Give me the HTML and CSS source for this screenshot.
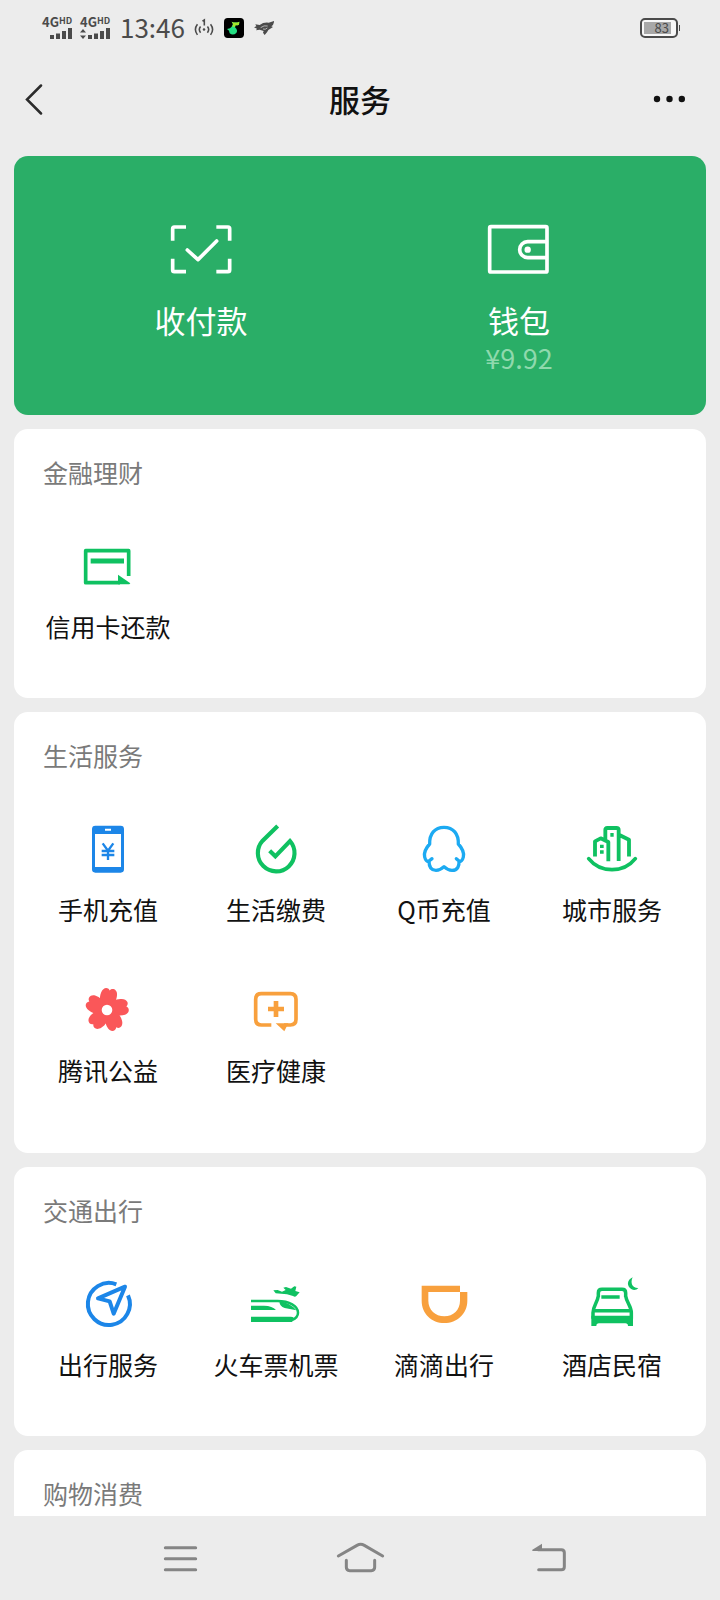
FILE: index.html
```html
<!DOCTYPE html>
<html lang="zh-CN">
<head>
<meta charset="utf-8">
<meta name="viewport" content="width=device-width, initial-scale=1">
<title>服务</title>
<link rel="stylesheet" href="styles.css">
</head>
<body>
<div class="app">
  <div class="status">
    <div class="signal">
      <span class="signal-name">4G<small>HD</small></span>
      <svg class="signal-bars" viewBox="0 0 32 11" aria-hidden="true"><path d="M10 11V7M16 11V5.500M22 11V3M28 11V0"/></svg>
    </div>
    <div class="signal">
      <span class="signal-name">4G<small>HD</small></span>
      <svg class="signal-bars" viewBox="0 0 32 11" aria-hidden="true"><path d="M10 11V7M16 11V5.500M22 11V3M28 11V0"/><path class="solid" d="M0 4.500 3 1 6 4.500ZM0 7.500 3 11 6 7.500Z"/></svg>
    </div>
    <time class="clock">13:46</time>
    <div class="status-icons">
      <svg class="hotspot" viewBox="490 54 64 60" aria-hidden="true"><path d="M501 72Q488 89 501 106M511 79Q503 89 511 99M543 72Q556 89 543 106M533 79Q541 89 533 99M517 62 523 58V76"/><circle cx="522" cy="89" r="4"/></svg>
      <svg class="music" viewBox="582 54 60 60" aria-hidden="true"><rect x="582" y="54" width="60" height="60" rx="11" fill="#000"/><path d="M605 65Q616 70 628 65L627 74Q620 77 617 75L615 82Q625 91 619 99 609 108 599 100L597 92 591 87 600 85 605 80 609 72Z" fill="#24df83"/><path d="M605 65Q616 70 628 65L627 74Q620 77 617 75L615 80 607 80 609 72Z" fill="#a5e52b"/></svg>
      <svg class="bird" viewBox="672 54 60 60" aria-hidden="true"><path d="M672 82 679 79 676 73 689 75Q701 66 716 68L733 63 729 75 724 79 729 81 715 90 711 97 704 105 699 98 701 93 689 89 678 91 681 86Z" fill="#4b4b4b"/><path d="M692 83Q702 75 713 78M699 87Q706 90 712 84" fill="none" stroke="#ececec" stroke-width="2"/></svg>
    </div>
    <div class="battery" role="img" aria-label="电量 83%"><span class="battery-level">83</span></div>
  </div>

  <header class="topbar">
    <button class="icon-button" type="button" aria-label="返回"><svg viewBox="0 0 32 32"><path d="M22 2.500 8 16.500 22 30.500"/></svg></button>
    <h1>服务</h1>
    <button class="icon-button" type="button" aria-label="更多"><svg viewBox="0 0 32 32"><g class="dots"><circle cx="4" cy="16" r="3.200"/><circle cx="16.500" cy="16" r="3.200"/><circle cx="28.800" cy="16" r="3.200"/></g></svg></button>
  </header>

  <main class="content">
    <section class="wallet">
      <button class="wallet-item" type="button">
        <svg viewBox="106 39 216 216" aria-hidden="true"><path d="M129 122V86Q129 81 134 81H169M260 81H295Q300 81 300 86V122M129 176V210Q129 215 134 215H169M260 215H295Q300 215 300 210V176"/><path d="M173 150 205 179 261 123" stroke-linecap="round" stroke-linejoin="round"/></svg>
        <span class="wallet-label">收付款</span>
      </button>
      <button class="wallet-item" type="button">
        <svg viewBox="1059 39 216 216" aria-hidden="true"><rect x="1079" y="80" width="172" height="136" rx="4"/><path d="M1251 125H1193A24 24 0 0 0 1193 173H1251"/><circle cx="1193" cy="149" r="9.500" fill="#fff" stroke="none"/></svg>
        <span class="wallet-label">钱包</span>
        <span class="wallet-amount">¥9.92</span>
      </button>
    </section>

    <section class="card">
      <h2>金融理财</h2>
      <div class="grid">
        <button class="item" type="button">
          <svg class="green" viewBox="180 294 168 168" aria-hidden="true"><path d="M326 408V332H197V428H300" stroke-width="11" stroke-linejoin="round"/><path d="M212 363H312" stroke-width="15"/><path class="solid" d="M294 404 331 430 328 433H294Z"/></svg>
          <span>信用卡还款</span>
        </button>
      </div>
    </section>

    <section class="card card-tall">
      <h2>生活服务</h2>
      <div class="grid">
        <button class="item" type="button">
          <svg class="blue" viewBox="120 63 168 168" aria-hidden="true"><path class="solid" fill-rule="evenodd" d="M166 77H242Q252 77 252 87V208Q252 218 242 218H166Q156 218 156 208V87Q156 77 166 77ZM165 102V201H243V102ZM195 86V92H213V86Z"/><path d="M188 130 204 152 220 130M185 153H223M185 165H223M204 152V180" stroke-width="7"/></svg>
          <span>手机充值</span>
        </button>
        <button class="item" type="button">
          <svg class="green" viewBox="624 63 168 168" aria-hidden="true"><path d="M713 78 668 122A55 55 0 1 0 750 123L706 169 689 152" stroke-width="12.500" stroke-linecap="butt"/></svg>
          <span>生活缴费</span>
        </button>
        <button class="item" type="button">
          <svg class="sky" viewBox="108 63 168 168" aria-hidden="true"><path d="M149 132C148 102 164 82 192 82S236 102 235 132C247 145 253 158 250 171 248 180 242 187 237 183L229 176M149 132C137 145 131 158 134 171 136 180 142 187 147 183L156 176M147 183C147 196 150 211 168 211 180 211 186 206 192 200 198 206 204 211 216 211 234 211 238 196 237 183" stroke-width="10" stroke-linecap="round" stroke-linejoin="round"/></svg>
          <span>Q币充值</span>
        </button>
        <button class="item" type="button">
          <svg class="green" viewBox="612 63 168 168" aria-hidden="true"><path d="M645 164V124L662 115 685 126V178M676 115V90Q675 84 682 84H709Q716 84 716 90V177M720 106 747 119V164" stroke-width="11.500" stroke-linecap="square" stroke-linejoin="round"/><path d="M626 176C661 220 731 220 766 176" stroke-width="11" stroke-linecap="round"/><path class="solid" d="M691 99H701V110H691ZM660 134H671V144H660ZM660 151H671V161H660Z"/></svg>
          <span>城市服务</span>
        </button>
        <button class="item" type="button">
          <svg class="red" viewBox="120 36 168 168" aria-hidden="true">
            <defs><path id="petal" d="M189 120C178 102 173 86 178 70 182 54 196 50 203 61 210 51 225 56 226 70 228 84 220 102 213 120Z"/></defs>
            <g class="solid"><circle cx="201" cy="120" r="32"/><use href="#petal" transform="rotate(6 201 120)"/><use href="#petal" transform="rotate(78 201 120)"/><use href="#petal" transform="rotate(150 201 120)"/><use href="#petal" transform="rotate(222 201 120)"/><use href="#petal" transform="rotate(294 201 120)"/></g>
            <circle cx="201" cy="120" r="16" fill="#fff" stroke="none"/>
          </svg>
          <span>腾讯公益</span>
        </button>
        <button class="item" type="button">
          <svg class="orange" viewBox="624 36 168 168" aria-hidden="true"><path d="M694 165H664Q647 165 647 148V88Q647 71 664 71H751Q768 71 768 88V148Q768 165 751 165H732" stroke-width="11"/><path d="M684 117H732M708 93V141" stroke-width="14"/><path class="solid" d="M707 160H745L733 184Z"/></svg>
          <span>医疗健康</span>
        </button>
      </div>
    </section>

    <section class="card">
      <h2>交通出行</h2>
      <div class="grid">
        <button class="item" type="button">
          <svg class="blue" viewBox="120 48 168 168" aria-hidden="true"><path d="M229 73A63 63 0 1 0 264 106" stroke-width="12"/><path d="M255 80 174 115 209 124 221 161Z" stroke-width="12" stroke-linejoin="round"/></svg>
          <span>出行服务</span>
        </button>
        <button class="item" type="button">
          <svg class="green" viewBox="624 48 168 168" aria-hidden="true"><path class="solid" d="M633 137H672C689 137 701 142 708 150H633ZM633 170H750Q762 169 762 176L756 186H633ZM719 123C717 131 722 139 734 144L769 151Q754 130 719 123ZM700 91 713 90 726 95 737 90 730 83 738 81 753 86 763 79 769 80 766 93 779 97 769 108Q765 112 759 108L741 103 707 100Z"/><path d="M633 123H712C748 123 774 138 774 158 774 169 766 176 756 180" stroke-width="7.500"/></svg>
          <span>火车票机票</span>
        </button>
        <button class="item" type="button">
          <svg class="orange" viewBox="108 48 168 168" aria-hidden="true"><path class="solid" fill-rule="evenodd" d="M125 77H240V96H262V122C262 161 231 189 193 189S125 161 125 122ZM145 96V122C145 149 166 169 193 169S240 149 240 122V96Z"/></svg>
          <span>滴滴出行</span>
        </button>
        <button class="item" type="button">
          <svg class="green" viewBox="612 48 168 168" aria-hidden="true"><path d="M655 111V99Q655 88 666 88H726Q737 88 737 99V111M655 108C652 128 639 138 639 158V176M737 108C740 128 754 138 754 158V176M664 111H719M640 152H752" stroke-width="10.500"/><path class="solid" d="M634 167H759V198H744Q744 190 736 190H657Q649 190 649 198H634ZM758 52C740 60 739 79 755 88 763 92 771 89 775 84 757 85 750 69 758 52Z"/></svg>
          <span>酒店民宿</span>
        </button>
      </div>
    </section>

    <section class="card">
      <h2>购物消费</h2>
    </section>
  </main>

  <nav class="navbar" aria-label="系统导航">
    <button type="button" aria-label="最近任务"><svg viewBox="60 84 180 180"><path d="M106 143H197M106 176H197M106 209H197"/></svg></button>
    <button type="button" aria-label="主屏幕"><svg viewBox="600 84 180 180"><path d="M625 168 681 136Q692 130 703 136L758 168M649 181V202Q649 212 659 212H724Q734 212 734 202V181"/></svg></button>
    <button type="button" aria-label="返回"><svg viewBox="1140 84 180 180"><path d="M1225 149H1294Q1303 149 1303 158V200Q1303 209 1294 209H1226"/><path class="solid" d="M1206 150 1236 131V153H1208Z"/></svg></button>
  </nav>
</div>
</body>
</html>
```
FILE: styles.css
```css
* {
  box-sizing: border-box;
}

body {
  margin: 0;
  background: #ececec;
  color: #111;
  font-family: "Noto Sans CJK SC", "Noto Sans", sans-serif;
}

h1,
h2 {
  margin: 0;
}

button {
  padding: 0;
  border: 0;
  background: none;
  color: inherit;
  font: inherit;
  cursor: pointer;
}

svg {
  display: block;
  fill: none;
}

.app {
  display: flex;
  flex-direction: column;
  height: 100vh;
}

/* Status bar */
.status {
  display: flex;
  flex: none;
  align-items: center;
  gap: 6px;
  height: 56px;
  padding: 0 42px;
  color: #4b4b4b;
}

.signal {
  display: flex;
  flex-direction: column;
  gap: 1px;
  width: 32px;
}

.signal-name {
  display: flex;
  font-size: 13px;
  font-weight: 700;
  line-height: 10px;
}

.signal-name small {
  font-size: 9px;
  line-height: 7px;
}

.signal-bars {
  width: 32px;
  height: 11px;
  stroke: #4b4b4b;
  stroke-width: 4;
}

.signal-bars .solid {
  fill: #4b4b4b;
  stroke: none;
}

.clock {
  margin-left: 2px;
  padding-bottom: 2px;
  font-size: 26px;
  line-height: 36px;
}

.status-icons {
  display: flex;
  align-items: center;
  gap: 10px;
  margin-left: 3px;
}

.status-icons svg {
  width: 20px;
  height: 20px;
}

.hotspot {
  fill: #4b4b4b;
}

.hotspot path {
  fill: none;
  stroke: #4b4b4b;
  stroke-width: 5;
}

.battery {
  position: relative;
  width: 38px;
  height: 20px;
  margin-left: auto;
  padding: 2px;
  border: 2px solid #4b4b4b;
  border-radius: 5px;
  background: #f8f8f8;
}

.battery::after {
  content: "";
  position: absolute;
  top: 5px;
  right: -4px;
  width: 1px;
  height: 6px;
  background: #4b4b4b;
}

.battery-level {
  display: block;
  width: 27px;
  height: 12px;
  padding-right: 2px;
  background: #a8a8a8;
  font-size: 13px;
  line-height: 12px;
  text-align: right;
}

/* Title bar */
.topbar {
  display: flex;
  flex: none;
  align-items: center;
  justify-content: space-between;
  height: 86px;
  padding: 0 35px 0 19px;
}

.topbar h1 {
  padding-left: 16px;
  font-size: 31px;
  font-weight: 500;
  line-height: 40px;
}

.icon-button svg {
  width: 32px;
  height: 32px;
  stroke: #2b2b2b;
  stroke-width: 2.5;
  stroke-linecap: round;
}

.icon-button .dots {
  fill: #111;
  stroke: none;
}

/* Cards */
.content {
  display: flex;
  flex: 1;
  flex-direction: column;
  gap: 14px;
  min-height: 0;
  margin-top: 14px;
  padding: 0 14px;
  overflow-y: auto;
  scrollbar-width: none;
}

.wallet,
.card {
  flex: none;
  border-radius: 14px;
}

.wallet {
  display: grid;
  grid-template-columns: 1fr 1fr;
  align-items: start;
  padding: 57px 28px 39px;
  background: #2aae67;
  color: #fff;
}

.wallet-item {
  display: flex;
  flex-direction: column;
  align-items: center;
}

.wallet-item svg {
  width: 72px;
  height: 72px;
  margin-bottom: 15px;
  stroke: #fff;
  stroke-width: 11;
}

.wallet-label {
  font-size: 31px;
  line-height: 40px;
}

.wallet-amount {
  color: #8fd9ad;
  font-size: 27px;
  line-height: 36px;
}

.card {
  padding: 25px 10px 54px;
  background: #fff;
}

.card-tall {
  padding-bottom: 65px;
}

.card h2 {
  padding-left: 19px;
  color: #7a7a7a;
  font-size: 25px;
  font-weight: 400;
  line-height: 36px;
}

.grid {
  display: grid;
  grid-template-columns: repeat(4, 1fr);
  row-gap: 55px;
  margin-top: 48px;
}

.item {
  display: flex;
  flex-direction: column;
  align-items: center;
  gap: 14px;
  font-size: 25px;
  line-height: 36px;
  white-space: nowrap;
}

.item svg {
  width: 56px;
  height: 56px;
  stroke: currentColor;
}

.item .solid {
  fill: currentColor;
  stroke: none;
}

.green {
  color: #0fc161;
}

.blue {
  color: #1c86e8;
}

.sky {
  color: #1caaf2;
}

.red {
  color: #fa5759;
}

.orange {
  color: #f8a03d;
}

/* System navigation */
.navbar {
  display: grid;
  flex: none;
  grid-template-columns: repeat(3, 1fr);
  align-items: center;
  justify-items: center;
  height: 84px;
  padding: 0 90px;
}

.navbar svg {
  width: 60px;
  height: 60px;
  stroke: #858585;
  stroke-width: 9;
  stroke-linecap: round;
}

.navbar .solid {
  fill: #858585;
  stroke: none;
}
```
